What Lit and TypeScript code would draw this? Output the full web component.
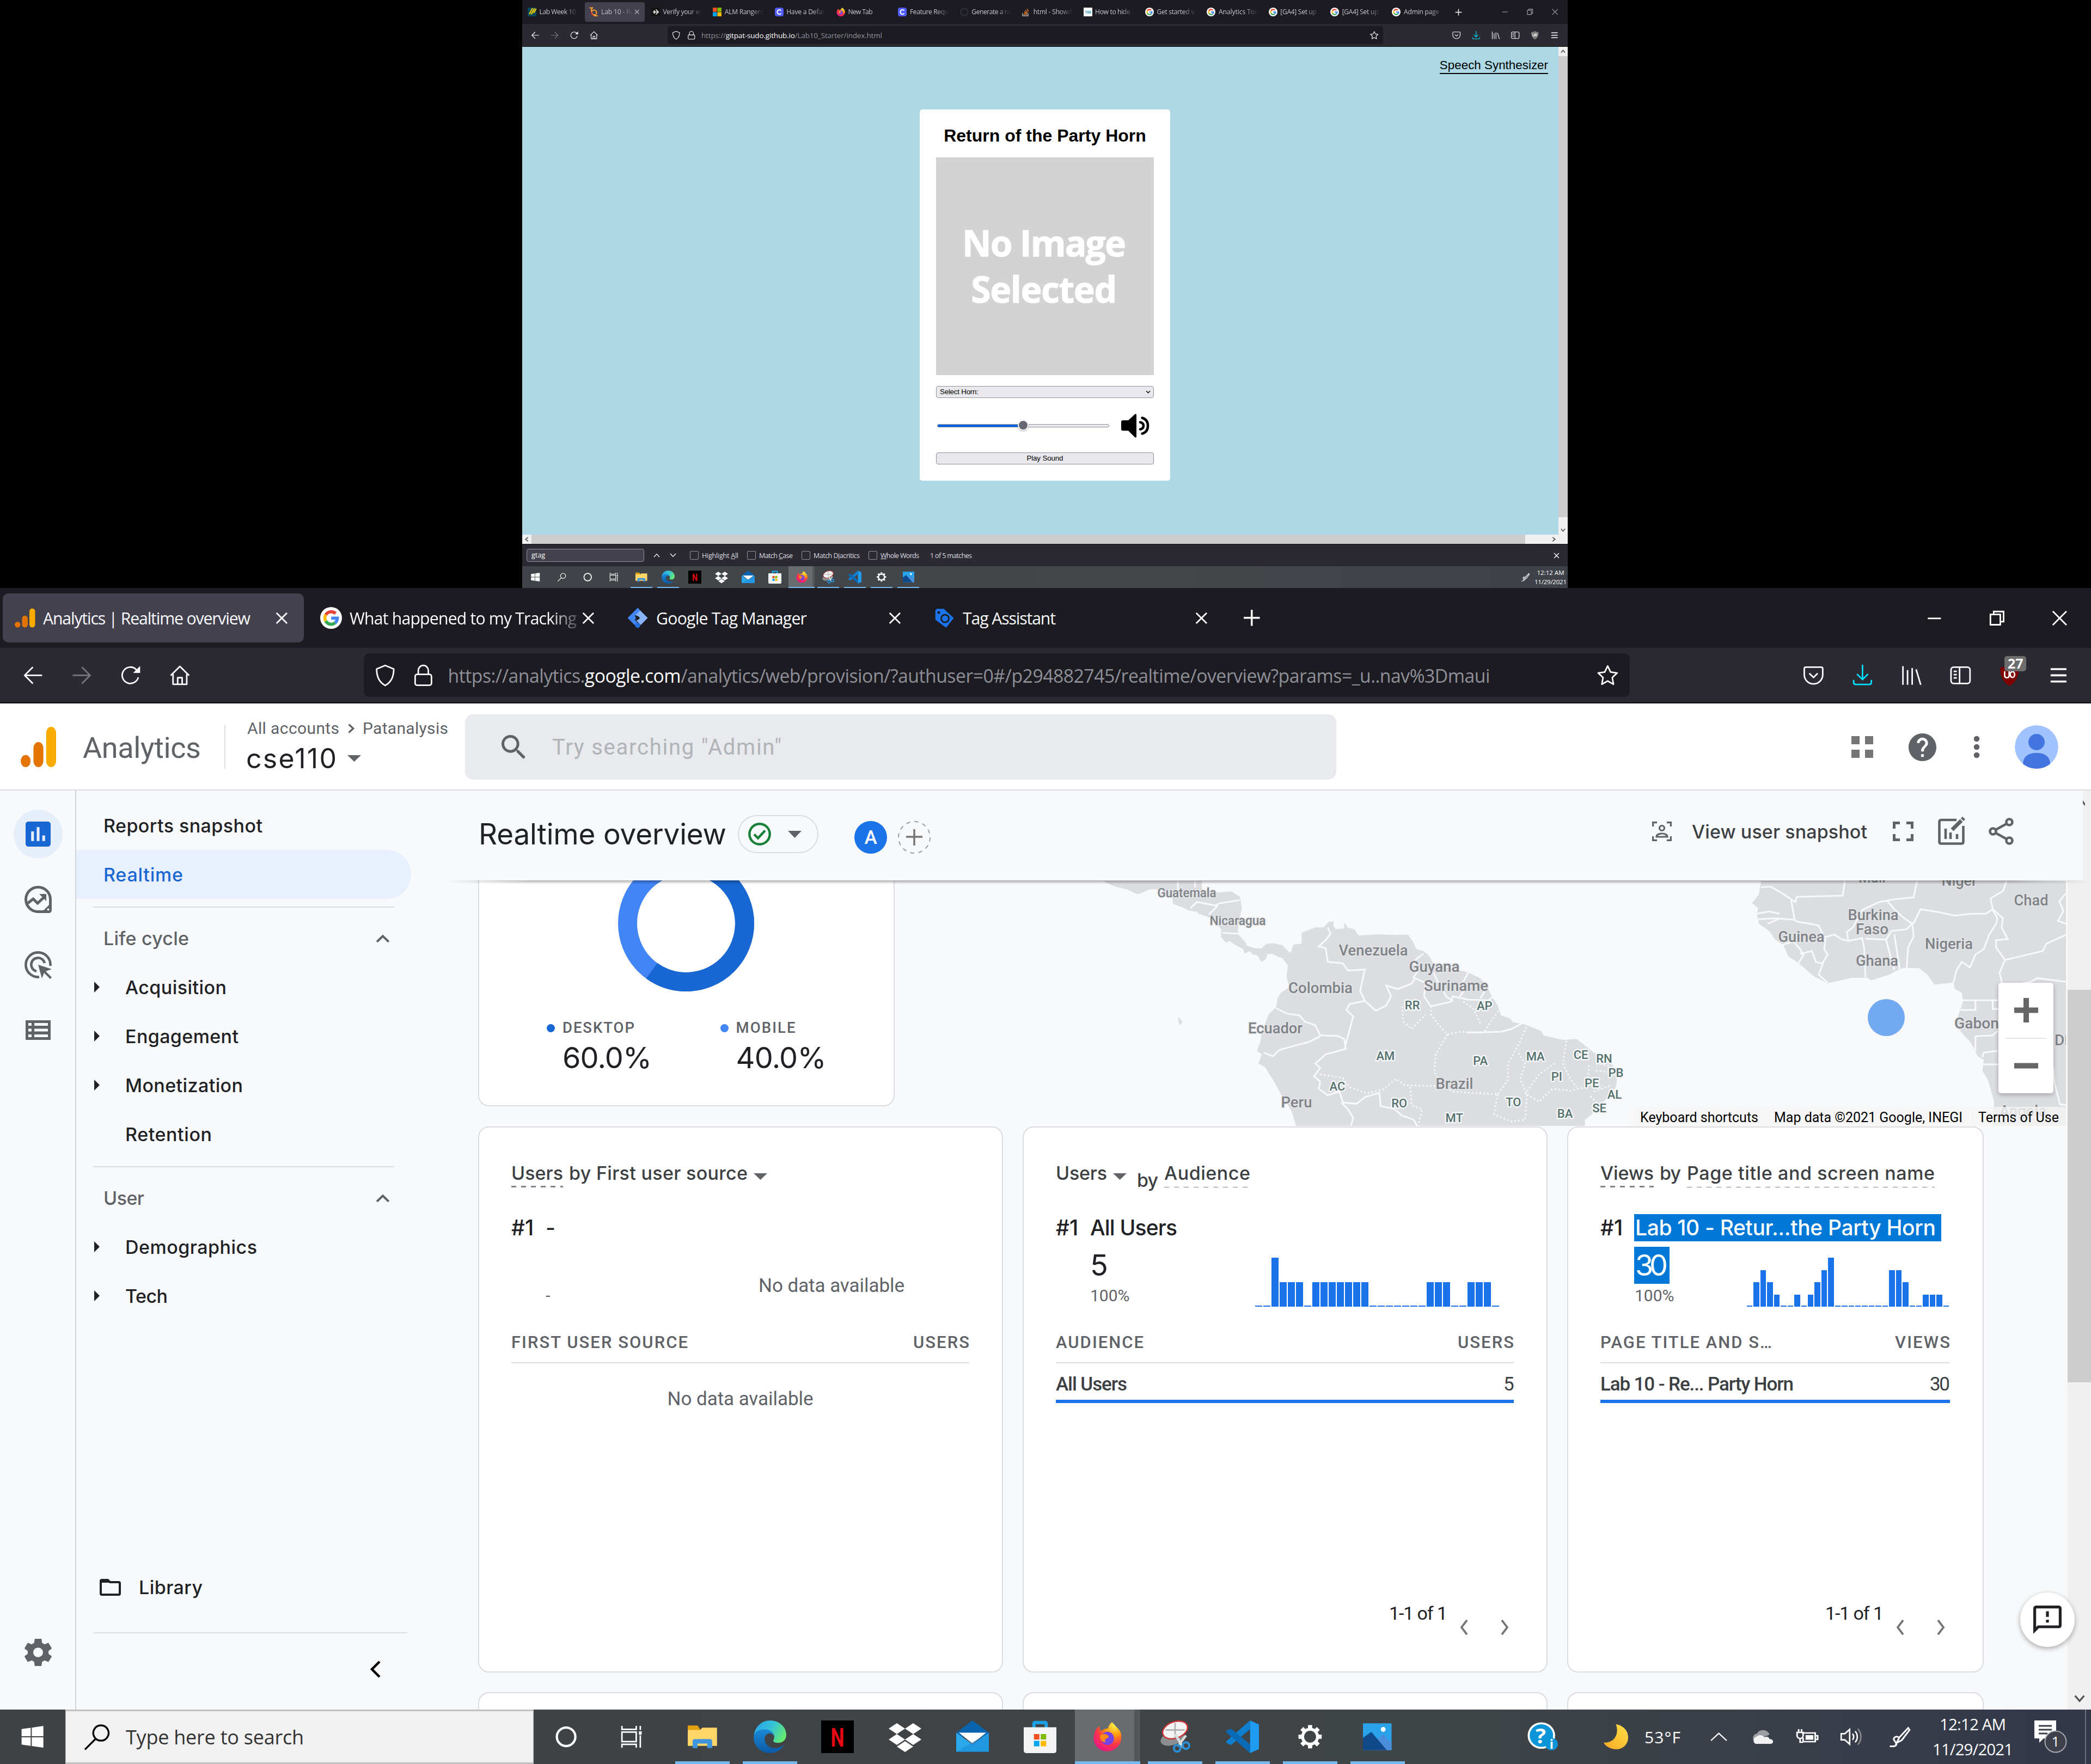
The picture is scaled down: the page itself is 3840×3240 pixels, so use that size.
import { LitElement, html, css, svg, unsafeCSS, noChange, nothing } from "lit";
import { customElement, property } from "lit/decorators.js";
import { directive, Directive } from "lit/directive.js";
import { classMap } from "lit/directives/class-map.js";

/* Tracks a single line of text out to a given width. */
class Fit extends Directive {
  render(_w: number) {
    return noChange;
  }
  update(part: any, [w]: [number]) {
    const el = part.element as HTMLElement;
    Promise.resolve().then(() => {
      const r = document.createRange();
      r.selectNodeContents(el);
      el.style.letterSpacing = "0px";
      const w0 = r.getBoundingClientRect().width;
      const n = (el.textContent || "").trim().length;
      if (w0 && n > 1) el.style.letterSpacing = ((w - w0) / (n - 1)).toFixed(3) + "px";
      el.style.width = w + "px";
    });
    return noChange;
  }
}
const fit = directive(Fit);

/* Lengths in screen units: 1px on the small display, 2.5px on the large one. */
const u = (n: number) => unsafeCSS(`calc(var(--u) * ${n})`);

const base = css`
  * { box-sizing: border-box; }
  svg { display: block; flex: none; overflow: visible; }
  .fit { display: inline-block; white-space: nowrap; flex: none; }
`;

const box = (vb: string, w: number, h: number, body: unknown) =>
  html`<svg viewBox=${vb} width=${w} height=${h} preserveAspectRatio="none">${body}</svg>`;

const googleG = svg`<circle cx="8" cy="8" r="8" fill="#fff"/><g fill="none" stroke-width="2.3"><path stroke="#ea4335" d="M4.1 5.7A4.6 4.6 0 0 1 11.3 4.8"/><path stroke="#fbbc05" d="M4.1 10.3a4.6 4.6 0 0 1 0-4.6"/><path stroke="#34a853" d="M4.1 10.3a4.6 4.6 0 0 0 6.9 1.3"/><path stroke="#4285f4" d="M8.1 8.1h4.5a4.6 4.6 0 0 1-1.6 3.5"/></g>`;
const gaBars = svg`<rect x="11.6" y="1" width="4.2" height="14" rx="2.1" fill="#f9ab00"/><rect x="6.2" y="6.3" width="4.2" height="8.7" rx="2.1" fill="#e37400"/><circle cx="2.9" cy="12.9" r="2.1" fill="#e37400"/>`;
const fox = svg`<defs><radialGradient id="fx" cx=".75" cy=".1" r="1"><stop offset="0" stop-color="#fff44f"/><stop offset=".35" stop-color="#ff980e"/><stop offset=".65" stop-color="#ff3647"/><stop offset="1" stop-color="#e31587"/></radialGradient></defs><path fill="url(#fx)" d="M15.4 5.4C14.6 3.6 13 2.6 12.2 1.6 11.5.8 11 .4 10.8 0 9.4.9 8.7 2.3 8.5 3.4 6.8 3.5 5.4 4.2 4.6 5 3.9 4.3 3.6 3.3 3.7 2.3 2.3 3 1.3 4.3.9 6.2.2 8.8.2 11.2 2.2 13.4 3.6 15 5.7 16 8 16c4.4 0 8-3.5 8-7.8 0-1-.2-2-.6-2.8z"/><circle cx="8.2" cy="8.9" r="3.6" fill="#7542e5"/><path fill="#ff8a16" d="M4 7.5c1-1.2 2.6-1.3 4-.5 1 .6 1.3 1.3.2 1.7-1.5.5-2 1.5-.8 2.3-2 .3-3.7-1.4-3.4-3.5z"/>`;

const FAV: Record<string, unknown> = {
  ga: gaBars,
  google: googleG,
  gtm: svg`<path fill="#8ab4f8" d="M8 .6 15.4 8 10.3 13.2 7 9.8 8.8 8 5.7 4.9z"/><path fill="#4285f4" d="M9.9 2.5 5.9 6.6 7.2 8 5.9 9.4l3.7 3.8L8 15.4.6 8 8 .6z"/><circle cx="8" cy="13.4" r="1.9" fill="#246fdb"/><path fill="#1c1b22" d="M8 6.3 9.7 8 8 9.7 6.3 8z"/>`,
  ta: svg`<path fill="#1a73e8" d="M2.5 1.3h5.2L15 8l-5.6 7.2L1.5 9.3V2.5z"/><circle cx="4" cy="4" r="1" fill="#1c1b22"/><circle cx="8.6" cy="8.4" r="2.8" fill="none" stroke="#1c1b22" stroke-width="1.1"/>`,
  lab: svg`<rect width="16" height="16" fill="#00465c"/><g stroke="#ffcd00" stroke-width="2.2"><path d="M3 12 9 1M6.5 12.5 12.5 1.5M11 10l4.5-8"/></g>`,
  horn: svg`<circle cx="9" cy="9" r="4.6" fill="none" stroke="#ffa033" stroke-width="2"/><path d="M.5.5h5.5L4 3.5V10l6 5h5.5" fill="none" stroke="#ffa033" stroke-width="2"/><path d="M3.5 7c0 4 1 6 4 7" fill="none" stroke="#be1931" stroke-width="1.5"/>`,
  arrow: svg`<rect width="16" height="16" fill="#151515"/><path d="M3 8h9M8.5 3.5 13 8l-4.5 4.5M5 5l2 3-2 3" fill="none" stroke="#eee" stroke-width="1.7"/>`,
  ms: svg`<path fill="#f25022" d="M0 0h7.6v7.6H0z"/><path fill="#7fba00" d="M8.4 0H16v7.6H8.4z"/><path fill="#00a4ef" d="M0 8.4h7.6V16H0z"/><path fill="#ffb900" d="M8.4 8.4H16V16H8.4z"/>`,
  c: svg`<rect width="16" height="16" rx="4" fill="#505cfd"/><path d="M11.5 5.5A4 4 0 1 0 11.5 10.5" fill="none" stroke="#fff" stroke-width="2"/>`,
  fox,
  gh: svg`<circle cx="8" cy="8" r="6.5" fill="none" stroke="#2b3138" stroke-width="2.5"/>`,
  so: svg`<path d="M2 10v5h10v-5" fill="none" stroke="#bcbbbb" stroke-width="1.4"/><path d="M4 12.6h6M4.2 10.2l6 .8M5 7.6l5.4 2.2M6.8 4.8l4.5 3.6M10 2l3 5" stroke="#f48024" stroke-width="1.3"/>`,
  tim: svg`<rect width="16" height="16" fill="#fff"/><text x="8" y="10.5" text-anchor="middle" font-family="Liberation Sans, sans-serif" font-weight="700" font-size="6.5" fill="#2a8fb5">TIM</text>`,
};

const UI: Record<string, unknown> = {
  back: svg`<path d="M8 1.8 1.8 8 8 14.2M2 8h13"/>`,
  fwd: svg`<path d="M8 1.8 14.2 8 8 14.2M14 8H1"/>`,
  reload: svg`<path d="M13.6 9.5A6.2 6.2 0 1 1 12 3.6L14 5.4"/><path d="M15 .9v5.3H9.7z" fill="currentColor" stroke="none"/>`,
  home: svg`<path d="M1 8.2 8 1.2l7 7M2.8 7v7.8h10.4V7M6.3 14.5V9.8h3.4v4.7" stroke-linejoin="round"/>`,
  shield: svg`<path d="M8 .5 14.5 3.2C14.5 9 12.7 13.2 8 15.7 3.3 13.2 1.5 9 1.5 3.2z" stroke-linejoin="round"/>`,
  lock: svg`<rect x="1.8" y="7.3" width="12.4" height="8.2" rx="1.5"/><path d="M4.2 7.2V4.3a3.8 3.8 0 0 1 7.6 0v2.9"/>`,
  star: svg`<path stroke-linejoin="round" d="m8 .9 2.2 4.6 5 .7-3.7 3.5.9 5.1L8 12.3l-4.4 2.5.9-5.1L.8 6.2l5-.7z"/>`,
  pocket: svg`<path d="M2.2 1.8h11.6q1.2 0 1.2 1.2v4.5a7 7 0 0 1-14 0V3q0-1.2 1.2-1.2zM4.8 6.5 8 9.6l3.2-3.1"/>`,
  down: svg`<path stroke="#00ddff" d="M8 0v11M3.8 7 8 11.2 12.2 7M1.3 11.5v1.8q0 1.6 1.6 1.6h10.2q1.6 0 1.6-1.6v-1.8"/>`,
  lib: svg`<path d="M1.5 1v14.2M5 4v11.2M8.5 2.5v12.7M11.5 3.5l3.5 11.7"/>`,
  side: svg`<rect x=".8" y="1.8" width="14.4" height="12.4" rx="2"/><path d="M7.3 2v12M2.8 5h2.4M2.8 7.5h2.4M2.8 10h2.4"/>`,
  menu: svg`<path stroke-width="1.5" d="M2 3.3h12M2 8h12M2 12.7h12"/>`,
  x: svg`<path d="M4 4l8 8M12 4l-8 8"/>`,
  plus: svg`<path stroke-width="1.5" d="M8 1.7v12.6M1.7 8h12.6"/>`,
  min: svg`<path d="M3 8.2h10"/>`,
  max: svg`<path d="M3 5.2h7.5V13H3zM5.5 5V3h7.5v7.7h-2"/>`,
  close: svg`<path d="M2.8 2.8l10.4 10.4M13.2 2.8 2.8 13.2"/>`,
};
const ui = (k: string, cls = "s16") => html`<svg class="ui ${cls}" viewBox="0 0 16 16">${UI[k]}</svg>`;

interface Tab { t: string; i: string; w: number; active?: boolean; }

const SEGOE = css`"Open Sans", "Noto Sans", sans-serif`;

@customElement("browser-chrome")
class BrowserChrome extends LitElement {
  @property({ attribute: false }) tabs: Tab[] = [];
  @property({ attribute: false }) url = ["", "", ""];
  @property({ type: Number }) urlWidth = 0;
  @property({ type: Boolean }) big = false;
  @property() badge = "";
  static styles = [base, css`
    :host { display: block; font-family: ${SEGOE}; color: #fbfbfe; background: #1c1b22; flex: none; }
    .ui { fill: none; stroke: currentColor; stroke-width: 1.15; }
    .s16 { width: ${u(15.5)}; height: ${u(15.5)}; }
    .s14 { width: ${u(15)}; height: ${u(15)}; }
    .strip { display: flex; height: ${u(44)}; padding: ${u(4)} 0 ${u(4)} ${u(2)}; gap: ${u(4)}; align-items: center; }
    .tab { width: ${u(109.4)}; height: ${u(36)}; border-radius: ${u(4)}; display: flex; align-items: center; padding: 0 ${u(8)} 0 ${u(8)}; flex: none; color: #c4c4ca; }
    .tab.active { background: #42414d; padding-right: ${u(6.5)}; }
    .big .tab { width: ${u(221.2)}; color: #fbfbfe; padding-right: ${u(8.6)}; }
    .fav { width: ${u(16)}; height: ${u(16)}; }
    .title { flex: 1; min-width: 0; overflow: hidden; white-space: nowrap; margin-left: ${u(5.6)}; font-size: ${u(12.1)}; line-height: ${u(20)}; padding-top: ${u(.4)}; mask-image: linear-gradient(90deg, #000 calc(100% - ${u(24)}), transparent); }
    .big .title { mask-image: linear-gradient(90deg, #000 calc(100% - ${u(22)}), #0003); margin-right: ${u(-.4)}; }
    .big .title.short { mask-image: none; }
    .add { width: ${u(36)}; display: grid; place-items: center; margin-left: ${u(-1.2)}; }
    .wins { margin-left: auto; display: flex; color: #a5a5ab; }
    .big .wins { color: #fff; }
    .wins > * { width: ${u(46)}; display: grid; place-items: center; }
    .bar { height: 42px; background: #2b2a33; border-bottom: 1px solid #0c0c0d; display: flex; align-items: center; }
    .big .bar { height: 102px; border-bottom-width: 2px; }
    .nav { width: ${u(267)}; padding-left: ${u(6)}; display: flex; flex: none; }
    .cell { width: ${u(36)}; display: grid; place-items: center; position: relative; }
    .dim { color: #77767e; }
    .url { flex: 1; height: ${u(32.3)}; background: #1c1b22; border-radius: ${u(4)}; display: flex; align-items: center; padding: 0 ${u(2)}; font-size: ${u(13.5)}; color: #8f8f98; }
    .url b { font-weight: 400; color: #fbfbfe; }
    .url .c { width: ${u(28)}; display: grid; place-items: center; flex: none; color: #fbfbfe; }
    .url .c:last-child { margin-left: auto; }
    .addr { margin-left: ${u(4)}; padding-top: ${u(.4)}; }
    .right { width: ${u(339)}; padding-right: ${u(6)}; display: flex; justify-content: flex-end; flex: none; }
    .n { position: absolute; left: ${u(14.5)}; top: ${u(-6.2)}; background: #6d6d6d; border-radius: ${u(2)}; font: 700 ${u(10)}/${u(11)} "Open Sans", sans-serif; width: ${u(16)}; text-align: center; }
  `];
  render() {
    return html`<div class=${classMap({ big: this.big })}>
      <div class="strip">
        ${this.tabs.map((t) => html`<div class=${classMap({ tab: true, active: !!t.active })}>
          <svg class="fav" viewBox="0 0 16 16">${FAV[t.i]}</svg>
          <div class=${classMap({ title: true, short: this.big && t.w < 400 })}><span class="fit" ${fit(t.w)}>${t.t}</span></div>
          ${this.big || t.active ? ui("x") : nothing}</div>`)}
        <div class="add">${ui("plus", "s14")}</div>
        <div class="wins"><div>${ui("min")}</div><div>${ui("max")}</div><div>${ui("close")}</div></div>
      </div>
      <div class="bar">
        <div class="nav"><div class="cell">${ui("back")}</div><div class="cell dim">${ui("fwd")}</div><div class="cell">${ui("reload")}</div><div class="cell">${ui("home")}</div></div>
        <div class="url"><div class="c">${ui("shield")}</div><div class="c">${ui("lock")}</div>
          <span class="addr fit" ${fit(this.urlWidth)}>${this.url[0]}<b>${this.url[1]}</b>${this.url[2]}</span>
          <div class="c">${ui("star")}</div></div>
        <div class="right">
          ${["pocket", "down", "lib", "side"].map((k) => html`<div class="cell">${ui(k)}</div>`)}
          <div class="cell"><svg class="s16" viewBox="0 0 16 16"><path fill=${this.badge ? "#800000" : "#7b7b7b"} d="M8 0c2 1.4 4.5 2 7 2 0 6-1.5 11-7 14C2.5 13 1 8 1 2c2.5 0 5-.6 7-2z"/><path d="M4.3 5v3q0 1.8 1.7 1.8T7.7 8V5M8.5 7.4a1.7 2.2 0 1 0 3.4 0 1.7 2.2 0 1 0-3.4 0" fill="none" stroke="#fff" stroke-width="1.1"/></svg>${this.badge ? html`<span class="n">${this.badge}</span>` : nothing}</div>
          <div class="cell">${ui("menu")}</div>
        </div>
      </div></div>`;
  }
}

const APPS: { k: string; s: number; on?: boolean; b: unknown }[] = [
  { k: "explorer", s: 21, on: true, b: svg`<path fill="#e5a00d" d="M0 2h8l2 3v4H0z"/><path fill="#ffd667" d="M0 6h10l2-2h12v16H0z"/><path fill="#3f96dd" d="M4 22v-6q0-2 2-2h12q2 0 2 2v6h-4v-4H8v4z"/>` },
  { k: "edge", s: 24, on: true, b: svg`<defs><linearGradient id="e1" x1="0" x2="1" y1=".2" y2=".6"><stop offset="0" stop-color="#2aa5e8"/><stop offset=".5" stop-color="#35c1d8"/><stop offset="1" stop-color="#66eb6e"/></linearGradient><linearGradient id="e2" x1="0" x2="0" y1="0" y2="1"><stop offset="0" stop-color="#1b8ad8"/><stop offset="1" stop-color="#0c59a4"/></linearGradient></defs><path fill="url(#e1)" d="M.2 11C1 4.5 6 0 12 0c7 0 12 5 12 10.5 0 4-3 6-6 6-3 0-4-1.2-3.5-2 1.5-2.5.5-6.5-4-6.500C6 8 2 9 .2 11z"/><path fill="url(#e2)" d="M.1 12C.5 8 4.5 6.5 8 6.5c4 0 6.500 2 6.500 4.500-1-1.600-3-2-4.500-1C6.500 12 8 18.500 13 20c3.500 1 7 0 9.500-2-2.500 4-6.500 6-10.500 6C5 24-.3 18.500.1 12z"/>` },
  { k: "netflix", s: 24, b: svg`<path d="M0 0h24v24H0z"/><text x="12" y="19" text-anchor="middle" font-family="Roboto, sans-serif" font-weight="700" font-size="19" textLength="10" lengthAdjust="spacingAndGlyphs" fill="#e50914">N</text>` },
  { k: "dropbox", s: 24, b: svg`<path fill="#fff" d="m6 2 6 4-6 4-6-4zM18 2l6 4-6 4-6-4zM6 10l6 4-6 4-6-4zM18 10l6 4-6 4-6-4zM6 19.2l6-4 6 4-6 4z"/>` },
  { k: "mail", s: 24, b: svg`<path fill="#0a64ad" d="M12 0 24 9v3H0V9z"/><path fill="#fff" d="M2 9h20L12 17z"/><path fill="#2aa8ea" d="M0 9l12 8.5L24 9v14H0z"/><path fill="#1784d8" d="M0 23 24 9v14z" opacity=".5"/>` },
  { k: "store", s: 24, b: svg`<path d="M7.5 6V2.500q0-1 1-1h7q1 0 1 1V6" fill="none" stroke="#1ba0e2" stroke-width="2.5"/><path fill="#f3f3f3" d="M0 5h24v17q0 2-2 2H2q-2 0-2-2z"/><path fill="#f25022" d="M7.5 10h4v4h-4z"/><path fill="#7fba00" d="M12.5 10h4v4h-4z"/><path fill="#00a4ef" d="M7.5 15h4v4h-4z"/><path fill="#ffb900" d="M12.5 15h4v4h-4z"/>` },
  { k: "firefox", s: 22, on: true, b: svg`<g transform="scale(1.5)">${fox}</g>` },
  { k: "snip", s: 24, on: true, b: svg`<ellipse cx="10" cy="13" rx="9" ry="5" fill="#8b8f92" transform="rotate(-20 10 13)"/><ellipse cx="12" cy="7" rx="9.5" ry="6" fill="#f4f4f4" stroke="#c33" transform="rotate(-20 12 7)"/><path d="M5 7h14M12 2v11" stroke="#aaa"/><path d="M12 10l6 10M20 11l-6 8" stroke="#d8dde0" stroke-width="1.8"/><circle cx="13.5" cy="20.5" r="2.4" fill="none" stroke="#2b8fd6" stroke-width="1.6"/><circle cx="20" cy="18.5" r="2.4" fill="none" stroke="#2b8fd6" stroke-width="1.6"/>` },
  { k: "code", s: 24, on: true, b: svg`<path fill="#1f9cf0" d="M17.5 0 24 3v18l-6.500 3z"/><path fill="#0f7fd0" d="M17.5 0v6.500L3.500 18 0 16.500v-1.200z"/><path fill="#0a6ab6" d="M17.5 24v-6.500L3.500 6 0 7.500v1.200z"/>` },
  { k: "settings", s: 22, on: true, b: svg`<path fill="none" stroke="#fff" stroke-width="3" d="M12 4.500a7.500 7.500 0 1 0 .01 0z"/><path fill="none" stroke="#fff" stroke-width="4.200" d="M12 .3V4M12 20v3.700M.3 12H4M20 12h3.700M3.700 3.700l2.600 2.600M17.700 17.700l2.600 2.600M3.700 20.300l2.600-2.600M17.700 6.300l2.600-2.600"/>` },
  { k: "photos", s: 22, on: true, b: svg`<path fill="#2aa3ea" d="M0 1h24v22H0z"/><path fill="#4a8edb" d="M11 15 17 10l7 7v6H11z"/><path fill="#10498a" d="M0 13 7 8l13 15H0z"/><circle cx="17" cy="6" r="2" fill="#fff"/>` },
];
const SHELL: Record<string, unknown> = {
  win: svg`<path fill="#fff" d="M0 2.3 6.7 1.4v6.2H0zM7.5 1.3 16 0v7.6H7.5zM0 8.4h6.7v6.3L0 13.7zM7.5 8.4H16V16l-8.5-1.2z"/>`,
  find: svg`<path fill="none" stroke="currentColor" stroke-width="1.1" d="M10.8 1a4.7 4.7 0 1 1-.01 0zM7.3 9.5 1 15.8"/>`,
  ring: svg`<circle cx="8" cy="8" r="6.8" fill="none" stroke="#fff" stroke-width="1.7"/>`,
  view: svg`<path fill="none" stroke="#fff" stroke-width="1.1" d="M1 4.5h10.5v7H1zM1 0v2.5h10.5V0M1 16v-2.5h10.5V16M14.5 0v3M14.5 7v9"/><path fill="#fff" d="M13.5 4h2v2.500h-2z"/>`,
};
const PEN = svg`<g fill="none" stroke="#fff" stroke-width="1.2"><path d="M14.5 1.5 8 8.5l-2 4 3.8-2L15.5 3zM8 8.5C5 7 3 9 4.5 11S7 14 4 15H1"/></g>`;

@customElement("task-bar")
class TaskBar extends LitElement {
  @property({ type: Boolean }) full = false;
  static styles = [base, css`
    :host { display: block; height: ${u(40)}; background: linear-gradient(90deg, #404347, #43474a 60%, #3e4147); color: #fff; font-family: ${SEGOE}; flex: none; }
    :host([full]) { background: linear-gradient(90deg, #3f4245, #3f4447 70%, #33384a); }
    .row { display: flex; height: 100%; align-items: stretch; }
    .c { width: ${u(48)}; display: grid; place-items: center; flex: none; }
    .sh { width: ${u(16.5)}; height: ${u(16)}; }
    .search { width: 860px; background: #f1f1f1; border: solid #c0c0c0; border-width: 3px 1px; color: #333; display: flex; align-items: center; padding-left: 31px; font-size: 36px; }
    .search .g { width: 50px; height: 48px; color: #000; margin-right: 29px; }
    .apps { display: flex; margin-left: 3px; gap: 1px; }
    .full .apps { margin-left: 9.5px; gap: 4px; }
    .a { width: ${u(48)}; display: grid; place-items: center; position: relative; }
    .a.on::after { content: ""; position: absolute; bottom: 0; left: ${u(4)}; right: ${u(4)}; height: ${u(2)}; background: #76b9ed; }
    .a.firefox { background: linear-gradient(90deg, #696c6f 91%, #53575a 91%); }
    .a.firefox::after { left: 0; right: 0; }
    .p21 { width: ${u(21.5)}; height: ${u(20)}; } .p22 { width: ${u(21)}; height: ${u(21.5)}; } .p24 { width: ${u(24)}; height: ${u(24)}; }
    .a.settings svg { width: ${u(17.5)}; height: ${u(17.5)}; }
    .tray { margin-left: auto; display: flex; align-items: center; font-size: ${u(12)}; }
    .clock { display: flex; flex-direction: column; align-items: center; line-height: ${u(18.6)}; font-size: ${u(11.8)}; }
    .small .pen { margin-right: 9px; } .small .clock { margin-right: 2px; line-height: 17px; font-size: 11.5px; }
    .t1 { margin-right: 84px; } .t2 { margin-right: 30px; } .t3 { margin-right: 54px; } .t4 { margin-right: 43px; } .t5 { margin-right: 40px; } .t6 { margin-right: 41px; } .t7 { margin-right: 49px; }
    .full .pen { margin-right: 41px; }
    .note { margin-left: 39px; margin-right: 33px; }
    .peek { width: 11px; border-left: 2px solid #6c7079; height: 100%; }
  `];
  render() {
    return html`<div class="row ${this.full ? "full" : "small"}">
      <div class="c"><svg class="sh" viewBox="0 0 16 16">${SHELL.win}</svg></div>
      ${this.full
        ? html`<div class="search"><svg class="g" viewBox="0 0 16 16">${SHELL.find}</svg><span class="fit" ${fit(327)}>Type here to search</span></div>`
        : html`<div class="c"><svg class="sh" viewBox="0 0 16 16">${SHELL.find}</svg></div>`}
      <div class="c"><svg class="sh" viewBox="0 0 16 16">${SHELL.ring}</svg></div>
      <div class="c"><svg class="sh" viewBox="0 0 16 16">${SHELL.view}</svg></div>
      <div class="apps">${APPS.map((a) => html`<div class="a ${a.k} ${a.on ? "on" : ""}"><svg class="p${a.s}" viewBox="0 0 24 24" preserveAspectRatio="none">${a.b}</svg></div>`)}</div>
      ${this.full ? html`<div class="tray">
        <span class="t1">${box("0 0 24 24", 56, 54, svg`<circle cx="11" cy="11" r="10" fill="#0b95d8" stroke="#fff" stroke-width="1.6"/><text x="10.5" y="17.5" text-anchor="middle" font-family="Open Sans, sans-serif" font-weight="700" font-size="17" fill="#fff">?</text><circle cx="19" cy="18" r="5" fill="#0b95d8"/><text x="19" y="22" text-anchor="middle" font-family="Open Sans, sans-serif" font-weight="700" font-size="10" fill="#fff">i</text>`)}</span>
        <span class="t2">${box("0 0 24 24", 45, 46, svg`<defs><linearGradient id="mo" x1="1" y1="0" x2="0" y2="1"><stop offset="0" stop-color="#ffe14a"/><stop offset="1" stop-color="#f7a823"/></linearGradient></defs><path fill="url(#mo)" d="M12 0c7 1 12 6 12 12.500C24 19 19 24 12.500 24 7 24 2 21.500 0 17.500c9 1 16-7 12-17.500z"/>`)}</span>
        <span class="fit t3" ${fit(66)}>53°F</span>
        <span class="t4">${box("0 0 16 8", 33, 16, svg`<path d="M1 7.5 8 .8l7 6.7" fill="none" stroke="#fff" stroke-width="1.1"/>`)}</span>
        <span class="t5">${box("0 0 20 14", 42, 28, svg`<path fill="#9c9fa3" d="M3 11a4 4 0 0 1 2-7 6 6 0 0 1 11 1z"/><path fill="#f2f2f2" d="M4 13.5a3.5 3.5 0 0 1 .5-6.500c2-2 5-2 7 .5 2-1 4-.5 4.500 1.500 4 0 4 4.500 1 4.500z"/>`)}</span>
        <span class="t6">${box("0 0 18 14", 40, 28, svg`<g fill="none" stroke="#fff" stroke-width="1.3"><path d="M5 3.5h11v8H6V8M16.500 6H18v3.500h-1.500M1 3h5v3a2.500 2.500 0 0 1-5 0zM2.300 0v3M4.700 0v3M3.500 8.500V12H6"/></g><path fill="#fff" d="M8 5.500h6.500v4.200H8z"/>`)}</span>
        <span class="t7">${box("0 0 18 16", 40, 36, svg`<path d="M1 5.5h3L8 2v12l-4-3.500H1z" fill="none" stroke="#fff" stroke-width="1.2"/><path d="M10.300 5.500a3.500 3.500 0 0 1 0 5M12.500 3.500a6.500 6.500 0 0 1 0 9" fill="none" stroke="#fff" stroke-width="1.2"/><path d="M14.700 1.500a9.500 9.500 0 0 1 0 13" fill="none" stroke="#888" stroke-width="1.2"/>`)}</span>
        <span class="pen">${box("0 0 16 16", 40, 40, PEN)}</span>
        <div class="clock"><span class="fit" ${fit(122)}>12:12 AM</span><span class="fit" ${fit(148)}>11/29/2021</span></div>
        <span class="note">${box("0 0 60 60", 60, 60, svg`<path fill="#fff" d="M0 0h40v33H17L9 41v-8H0z"/><path d="M8 10h24M8 17h24M8 24h16" stroke="#3a3e48" stroke-width="3"/><circle cx="39" cy="39" r="19.5" fill="#3e414b" stroke="#a8a9ad" stroke-width="2"/><text x="39" y="48" text-anchor="middle" font-family="Open Sans, sans-serif" font-size="26" fill="#fff">1</text>`)}</span>
        <div class="peek"></div>
      </div>` : html`<div class="tray"><span class="pen">${box("0 0 16 16", 16, 16, PEN)}</span>
        <div class="clock"><span class="fit" ${fit(50)}>12:12 AM</span><span class="fit" ${fit(59)}>11/29/2021</span></div></div>`}
    </div>`;
  }
}

@customElement("party-screen")
class PartyScreen extends LitElement {
  static styles = [base, css`
    :host { display: flex; flex-direction: column; width: 1920px; height: 1080px; --u: 1px; font-family: "Liberation Sans", Arial, sans-serif; background: #add8e6; }
    .view { height: 896px; display: flex; }
    .page { flex: 1; display: flex; flex-direction: column; align-items: flex-start; }
    .link { align-self: flex-end; margin: 19px 19px 0 0; font-size: 22.4px; line-height: 29px; border-bottom: 2px solid #000; color: #000; }
    .card { margin: 65px 0 0 730px; width: 460px; height: 682px; background: #fff; border-radius: 5px; padding: 9px 30px 0; }
    h1 { margin: 0; font-size: 32px; line-height: 79px; text-align: center; white-space: nowrap; }
    .pic { height: 400px; background: #d3d3d3; color: #fff; text-align: center; font: 700 66px/84.5px "Open Sans", "Noto Sans", sans-serif; padding-top: 114px; -webkit-text-stroke: 1px #fff; }
    .pic .fit { margin-left: -5px; }
    .field { height: 22px; border: 1px solid #8f8f9d; border-radius: 4px; background: #e9e9ed; font-size: 13.33px; line-height: 20px; display: flex; align-items: center; }
    .sel { margin-top: 20px; justify-content: space-between; padding: 0 5px 0 6px; }
    .btn { justify-content: center; }
    .vol { height: 100px; display: flex; align-items: center; gap: 22px; padding: 1px 0 0 2px; }
    .track { width: 316px; height: 6px; border-radius: 3px; border: 1px solid #8f8f9d; background: linear-gradient(90deg, #0060df 50%, #e9e9ed 50%); position: relative; }
    .thumb { position: absolute; left: 147px; top: -9px; width: 20px; height: 20px; border-radius: 50%; background: #676774; border: 2px solid #fff; box-shadow: 0 1px 2px #0006; }
    .vs { width: 17px; background: #f0f0f0; display: flex; flex-direction: column; justify-content: space-between; }
    .hs { height: 17px; background: #f0f0f0; display: flex; align-items: center; }
    .vs .thumbv { height: 847px; background: #cdcdcd; }
    .thumbh { width: 1825px; height: 17px; background: #cdcdcd; }
    .ar { width: 17px; height: 17px; display: grid; place-items: center; }
    .hs .last { margin-left: 44px; }
    .findbar { height: 41px; border-top: 1px solid #0c0c0d; background: #2b2a33; color: #dcdce0; display: flex; align-items: center; font: 12.5px "Open Sans", "Noto Sans", sans-serif; flex: none; }
    .inp { margin-left: 8px; width: 216px; height: 24px; border: 1px solid #8f8f9d; border-radius: 4px; background: #42414d; color: #fff; padding-left: 8px; line-height: 21px; }
    .ck { width: 16px; height: 16px; border: 1px solid #8f8f9d; border-radius: 2px; background: #2b2a33; margin: 0 6px 0 16px; }
    .inp + svg { margin-left: 17px; } .inp + svg + svg { margin: 0 9px 0 18px; }
    .m { margin-left: 20px; } .cl { margin: 0 15px 0 auto; }
  `];
  private tabs: Tab[] = [
    { t: "Lab Week 10", i: "lab", w: 67 }, { t: "Lab 10 - Return", i: "horn", w: 84, active: true },
    { t: "Verify your email", i: "arrow", w: 90 }, { t: "ALM Rangers", i: "ms", w: 71 },
    { t: "Have a Default", i: "c", w: 80 }, { t: "New Tab", i: "fox", w: 45 },
    { t: "Feature Request", i: "c", w: 87 }, { t: "Generate a random", i: "gh", w: 103 },
    { t: "html - Show/hide", i: "so", w: 92 }, { t: "How to hide a div", i: "tim", w: 92 },
    { t: "Get started with", i: "google", w: 86 }, { t: "Analytics Tools", i: "google", w: 82 },
    { t: "[GA4] Set up An", i: "google", w: 84 }, { t: "[GA4] Set up An", i: "google", w: 84 },
    { t: "Admin page - h", i: "google", w: 82 },
  ];
  render() {
    const a = (d: string) => box("0 0 10 10", 9, 9, svg`<path d=${d} fill="none" stroke="#505050" stroke-width="1.8"/>`);
    const ck = (pre: string, key: string, post: string, w: number) => html`<span class="ck"></span><span class="fit" ${fit(w)}>${pre}<u>${key}</u>${post}</span>`;
    const nav = (d: string) => box("0 0 12 10", 12, 8, svg`<path d=${d} fill="none" stroke="#fbfbfe" stroke-width="1.4"/>`);
    return html`
      <browser-chrome .tabs=${this.tabs} .url=${["https://", "gitpat-sudo.github.io", "/Lab10_Starter/index.html"]} urlWidth="332"></browser-chrome>
      <div class="view"><div class="page">
        <div class="link">Speech Synthesizer</div>
        <div class="card">
          <h1>Return of the Party Horn</h1>
          <div class="pic"><span class="fit" ${fit(301)}>No Image</span><br><span class="fit" ${fit(268)}>Selected</span></div>
          <div class="field sel"><span class="fit" ${fit(71)}>Select Horn:</span>${box("0 0 10 8", 9, 6, svg`<path d="M1 1.5 5 6l4-4.5" fill="none" stroke="#000" stroke-width="1.7"/>`)}</div>
          <div class="vol"><div class="track"><div class="thumb"></div></div>
            ${box("0 0 51 44", 51, 44, svg`<path d="M3 12h10L25 1q3-2 3 1v40q0 3-3 1L13 31H3q-3 0-3-3V15q0-3 3-3z"/><path d="M35 15.5q6 1.5 6 6.500t-6 6.500" fill="none" stroke="#000" stroke-width="4.5" stroke-linecap="round"/><path d="M38.5 7.5q10.500 3 10.500 14.500T38.500 36.500" fill="none" stroke="#000" stroke-width="4.5" stroke-linecap="round"/>`)}
          </div>
          <div class="field btn"><span class="fit" ${fit(67)}>Play Sound</span></div>
        </div>
      </div>
      <div class="vs"><div><div class="ar">${a("M1 7.5 5 2.5l4 5")}</div><div class="thumbv"></div></div><div class="ar">${a("M1 2.5 5 7.5l4-5")}</div></div></div>
      <div class="hs"><div class="ar">${a("M7.5 1 2.5 5l5 4")}</div><div class="thumbh"></div><div class="ar last">${a("M2.5 1 7.5 5l-5 4")}</div></div>
      <div class="findbar"><div class="inp">gtag</div>${nav("M1 9 6 2l5 7")}${nav("M1 1 6 8l5-7")}
        ${ck("Highlight ", "A", "ll", 67)}${ck("Match ", "C", "ase", 62)}${ck("Match D", "i", "acritics", 85)}${ck("", "W", "hole Words", 71)}
        <span class="fit m" ${fit(77)}>1 of 5 matches</span><span class="cl">${box("0 0 10 10", 11, 11, svg`<path d="M1 1l8 8M9 1 1 9" stroke="#fbfbfe" stroke-width="1.3"/>`)}</span></div>
      <task-bar></task-bar>`;
  }
}

const LAND = [
  "M130,54L275,54L275,100L300,118L318,112L330,140L333,200L328,300L327,345L338,390L340,410L352,425L362,425L368,402L378,397L392,408L400,440L404,450L408,405L420,400L420,340L440,310L452,310L460,278L467,278L466,300L470,320L482,315L482,283L487,310L497,322L503,355L530,348L555,352L575,350L582,390L587,430L597,440L605,465L611,505L640,540L660,555L680,590L690,640L697,690L705,740L710,795L723,812L727,832L745,845L768,880L772,905L800,930L820,925L835,970L845,1000L868,1050L880,1110L877,1190L865,1250L850,1300L842,1340L832,1370L832,1404L412,1404L405,1320L390,1230L380,1160L370,1100L367,1080L357,1060L362,1010L355,990L360,940L362,890L372,790L383,750L385,700L390,670L402,640L398,580L400,520L392,480L385,470L377,455L370,458L368,485L361,500L356,465L348,458L345,440L337,455L335,430L325,410L315,385L310,395L303,365L303,320L290,260L270,235L268,225L255,215L250,205L233,180L232,150L215,100L200,100L182,128L165,100L148,85Z",
  "M1088,54L1532,54L1532,1404L1425,1404L1427,1270L1418,1150L1410,1100L1412,1040L1403,1020L1397,970L1392,940L1380,890L1372,850L1376,780L1382,720L1380,670L1370,650L1368,615L1340,625L1330,570L1318,535L1295,533L1285,550L1275,570L1248,602L1243,588L1220,588L1185,618L1165,580L1150,530L1140,500L1128,470L1120,405L1108,375L1103,345L1100,330L1085,290L1082,235L1084,205L1075,175L1085,130Z",
  "M240,800L247,830L242,850Z",
];
const BORDER = [
  "M458,310L462,345L455,380L445,415L455,425L458,500L480,508L487,548L512,542L505,660L512,715L490,732L485,765L495,800L482,985",
  "M383,755L398,785L417,795L425,830L440,850L447,905L472,908L482,925L484,980L455,1010L440,1060L447,1085L438,1130L447,1160L445,1200L458,1235L475,1215L480,1275L500,1282L512,1245L533,1222L535,1295L555,1310L565,1345L583,1370L588,1404",
  "M447,910L430,942L410,962L388,985L378,1020L365,1000", "M478,1275L487,1310L495,1360L492,1404",
  "M512,715L528,770L543,740L550,690L543,630L560,650L580,620L585,590L600,615L598,690L608,745L637,720L640,690L662,708L692,712L700,685",
  "M597,455L582,500L590,545L582,590", "M612,560L618,610L625,650L630,690L640,715", "M662,560L655,610L658,650L650,690", "M690,640L680,700",
  "M740,840L725,870L710,885L660,890",
  "M232,140L240,110L240,54M265,54V90M258,205L268,170L295,190L300,178L330,160M285,240L298,190M305,340L327,345",
  "M1088,90L1102,85L1118,120L1132,155L1138,170L1140,142L1207,135L1210,54",
  "M1132,160L1137,270L1142,280L1160,290L1172,300L1180,365L1195,350L1205,375L1215,385L1235,370L1238,420L1240,585",
  "M1084,265L1110,260L1137,268M1082,235L1100,222L1115,235M1098,290L1115,262M1120,405L1135,388L1145,430L1150,462L1142,510M1145,455L1162,440L1168,500L1178,510L1172,570L1185,615M1182,370L1180,430L1185,460L1177,510",
  "M1215,385L1213,335L1222,310L1235,215L1260,170L1282,155L1310,145L1315,54",
  "M1272,165L1282,210L1295,255L1308,290L1300,320L1278,330L1270,378L1240,372M1270,378L1275,450L1282,545M1282,350L1290,545M1308,280L1310,360L1302,420L1300,535",
  "M1310,290L1320,210L1345,225L1370,245L1395,235L1415,235L1425,210L1422,150L1440,110L1445,54",
  "M1425,215L1432,260L1430,290L1420,350L1412,430L1400,460L1392,530L1380,500L1372,550L1368,615",
  "M1425,210L1440,260L1438,310L1447,375L1430,380L1430,420L1443,490L1465,470L1498,440L1503,400L1532,350M1443,490L1435,560L1440,640L1480,610L1490,590L1532,610",
  "M1532,120L1522,165L1528,220L1520,275L1532,290", "M1380,712H1432M1400,712V765H1378M1425,712V760H1440M1400,990V910L1425,905L1432,880M1410,1025L1412,1000L1432,990M1410,1065H1440M1513,1080L1515,1170L1523,1285L1532,1290",
];
const FINE = [
  "M566,745L568,830L580,870L600,790M608,745L608,790L620,850L632,900L650,885L685,890L695,830L706,770M655,720L670,760L680,840M632,900L615,1010L613,1110L625,1180L640,1215L705,1230L720,1150L720,1060L735,960L748,850",
  "M447,1120L480,1140L490,1190L515,1225L540,1200L557,1145L570,1180L625,1185M578,1190L580,1290L595,1310L590,1404M705,1230L700,1340L725,1380L745,1370L748,1230L738,1150L745,1060L735,1000",
  "M748,1230L765,1270L785,1200L810,1210L835,1190L838,1070M805,935L800,1060L810,1140L820,1190M788,1060L765,1120L745,1230M848,1060L870,1075M848,1100L878,1110M845,1215L870,1180M840,1240L852,1290",
];
type L = [string, number, number, number, number];
const NAMES: L[] = [
  ["Guatemala", 2179.5, 1648, 108, 23], ["Nicaragua", 2273, 1699, 103, 23], ["Venezuela", 2522, 1755, 127, 27], ["Guyana", 2634, 1785, 93, 27],
  ["Suriname", 2674, 1820, 118, 27], ["Colombia", 2425, 1824, 118, 27], ["Ecuador", 2342, 1898, 100, 27], ["Peru", 2381, 2034, 57, 27], ["Brazil", 2671, 2000, 69, 27],
  ["Guinea", 3308, 1730, 85, 27], ["Burkina", 3440, 1690, 93, 27], ["Faso", 3438, 1716, 60, 27], ["Ghana", 3447, 1774, 78, 27], ["Nigeria", 3579, 1743, 88, 27],
  ["Chad", 3730, 1663, 63, 27], ["Niger", 3598, 1627, 65, 27], ["Mali", 3438, 1620.5, 50, 27], ["Gabon", 3630, 1889, 82, 27], ["DR", 3791, 1920, 36, 27], ["Angola", 3715, 2050, 86, 27],
];
const STATES: [string, number, number][] = [
  ["RR", 581, 762], ["AP", 686, 766], ["AM", 542, 1041], ["PA", 680, 1067], ["MA", 760, 1043], ["CE", 826, 1036], ["RN", 860, 1055], ["PB", 877, 1133], ["PI", 791, 1155],
  ["PE", 842, 1190], ["AL", 875, 1253], ["SE", 853, 1328], ["AC", 472, 1209], ["RO", 562, 1302], ["TO", 728, 1297], ["MT", 642, 1382], ["BA", 803, 1360],
];

@customElement("geo-map")
class GeoMap extends LitElement {
  static styles = [base, css`
    :host { display: block; position: relative; width: 2151px; height: 451px; overflow: hidden; font-family: Roboto, sans-serif; }
    .land { fill: #dcdde1; }
    .bd { fill: none; stroke: #f8f9fb; stroke-width: 3; vector-effect: non-scaling-stroke; }
    .fine { fill: none; stroke: #f6f7fa; stroke-width: 3; stroke-dasharray: 3 4; vector-effect: non-scaling-stroke; }
    text { text-anchor: middle; paint-order: stroke; stroke: #e4e5e8; stroke-width: 3px; stroke-linejoin: round; }
    .nm { fill: #7f8387; font-weight: 500; } .st { fill: #56716d; font-size: 22px; font-weight: 500; stroke: #f4f6f7; stroke-width: 5px; }
    .pin { position: absolute; left: 1787px; top: 218px; width: 68px; height: 68px; border-radius: 50%; background: #73a9f0; }
    .zoom { position: absolute; left: 2027px; top: 188px; width: 101px; height: 203px; background: #fff; border-radius: 5px; box-shadow: 0 3px 8px #0004; display: flex; flex-direction: column; align-items: center; justify-content: space-between; padding: 28px 0 28px; }
    .zoom i { width: 75px; height: 2px; background: #e6e6e6; }
    .att { position: absolute; right: 0; bottom: 0; display: flex; gap: 3px; height: 35px; color: #000; font-size: 25px; line-height: 40px; }
    .att > div { background: #f5f5f5cc; padding: 0 13px; }
  `];
  render() {
    return html`
      <svg viewBox="1643 1617 2154 451" width="2154" height="451">
        <g transform="translate(1860 1600) scale(1.26276 .33333)">
          ${LAND.map((d) => svg`<path class="land" d=${d}/>`)}
          ${BORDER.map((d) => svg`<path class="bd" d=${d}/>`)}
          ${FINE.map((d) => svg`<path class="fine" d=${d}/>`)}
        </g>
        ${NAMES.map(([t, x, y, w, s]) => svg`<text class="nm" x=${x} y=${y} font-size=${s} textLength=${w} lengthAdjust="spacingAndGlyphs">${t}</text>`)}
        ${STATES.map(([t, x, y]) => svg`<text class="st" x=${1860 + x * 1.26276} y=${1600 + y / 3}>${t}</text>`)}
      </svg>
      <div class="pin"></div>
      <div class="zoom">${box("0 0 44 45", 44, 45, svg`<path d="M22 0v45M0 22.5h44" stroke="#666" stroke-width="10"/>`)}<i></i>${box("0 0 44 45", 44, 45, svg`<path d="M0 22.5h44" stroke="#666" stroke-width="10"/>`)}</div>
      <div class="att"><div><span class="fit" ${fit(217)}>Keyboard shortcuts</span></div><div><span class="fit" ${fit(346)}>Map data ©2021 Google, INEGI</span></div><div><span class="fit" ${fit(148)}>Terms of Use</span></div></div>`;
  }
}

const GEAR = "M19.43 12.98c.04-.32.07-.64.07-.98s-.03-.66-.07-.98l2.11-1.65c.19-.15.24-.42.12-.64l-2-3.46c-.12-.22-.39-.3-.61-.22l-2.49 1c-.52-.4-1.08-.73-1.69-.98l-.38-2.65C14.46 2.18 14.25 2 14 2h-4c-.25 0-.46.18-.49.42l-.38 2.65c-.61.25-1.17.59-1.69.98l-2.49-1c-.23-.09-.49 0-.61.22l-2 3.46c-.13.22-.07.49.12.64l2.11 1.65c-.04.32-.07.65-.07.98s.03.66.07.98l-2.11 1.65c-.19.15-.24.42-.12.64l2 3.46c.12.22.39.3.61.22l2.49-1c.52.4 1.08.73 1.69.98l.38 2.65c.03.24.24.42.49.42h4c.25 0 .46-.18.49-.42l.38-2.65c.61-.25 1.17-.59 1.69-.98l2.49 1c.23.09.49 0 .61-.22l2-3.46c.12-.22.07-.49-.12-.64l-2.11-1.65zM12 15.5c-1.93 0-3.5-1.57-3.5-3.5s1.57-3.5 3.5-3.5 3.5 1.57 3.5 3.5-1.57 3.5-3.5 3.5z";
const G5 = "#5f6368";
const caret = (w = 25, h = 12) => box("0 0 10 5", w, h, svg`<path d="M0 0h10L5 5z" fill=${G5}/>`);
const chev = (d: string, c: string, w: number, h: number, vb = "0 0 12 8") => box(vb, w, h, svg`<path d=${d} fill="none" stroke=${c} stroke-width="1.9"/>`);

interface Card { rank: string; title: unknown; head: [string, number, string, number]; name?: string; nameW?: number; value?: string; valueW?: number; sel?: boolean; bars?: number[]; row?: [string, number, string, number]; cls: string; }

@customElement("analytics-app")
class AnalyticsApp extends LitElement {
  static styles = [base, css`
    :host { display: flex; flex-direction: column; height: 1848px; font-family: Roboto, "Noto Sans", sans-serif; background: #f8f9fb; color: #202124; }
    .g { font-family: Inter, Roboto, sans-serif; }
    header { height: 160px; border-bottom: 2px solid #dadce0; background: #fff; display: flex; align-items: center; padding: 2px 60px 0 38px; flex: none; }
    .brand { margin: 3px 2px 0 49px; font-size: 54px; color: #5f6368; }
    .sep { width: 2px; height: 80px; background: #dadce0; margin: 0 40px 0 41px; }
    .acct { width: 400px; height: 112px; flex: none; }
    .crumb { height: 43px; display: flex; align-items: center; font-size: 30px; color: #5f6368; justify-content: space-between; width: 369px; }
    .prop { height: 67px; display: flex; align-items: center; font-size: 50px; gap: 20px; margin-left: -2px; }
    .search { width: 1600px; height: 120px; border-radius: 15px; background: #e8eaed; display: flex; align-items: center; gap: 49px; padding-left: 67px; color: #b0b4b8; font-size: 40px; }
    .tools { margin-left: auto; display: flex; align-items: center; }
    .tools > :nth-child(2) { margin: 0 68px 0 65px; } .tools > :nth-child(4) { margin-left: 64px; }
    .body { display: flex; height: 1688px; }
    .rail { width: 140px; border-right: 2px solid #d3d5d9; padding: 20px 0 60px 2px; display: flex; flex-direction: column; flex: none; }
    .rail > div { height: 120px; display: grid; place-items: center; }
    .rail > div:last-child { margin-top: auto; height: 90px; }
    .on { width: 90px; height: 90px; border-radius: 50%; background: #e6eefa; display: grid; place-items: center; }
    nav { width: 678px; padding-top: 19px; display: flex; flex-direction: column; flex: none; font: 500 34px Inter, Roboto, sans-serif; }
    .it { height: 90px; display: flex; align-items: center; padding-left: 50px; flex: none; }
    .it.sub { padding-left: 33px; } .it.sub svg { margin-right: 47px; } .it.nosub { padding-left: 90px; }
    .it.cur { width: 615px; background: #e8f0fe; color: #1967d2; border-radius: 0 45px 45px 0; }
    .it.grp { color: #5f6368; } .it.grp svg { margin-left: auto; margin-right: 102px; }
    .hr { width: 553px; height: 2px; background: #dadce0; margin: 14px 0 11px 31px; flex: none; }
    .libr { margin-top: auto; padding-left: 43px; gap: 33px; }
    .hr.low { width: 576px; margin: 38px 0 0 32px; }
    .col { height: 140px; display: flex; align-items: center; padding: 0 0 9px 539px; flex: none; }
    .main { flex: 1; position: relative; }
    .bar { height: 165px; width: 3007px; display: flex; align-items: center; padding: 0 127px 5px 61px; background: #f8f9fb; position: relative; z-index: 1; }
    .bar h2 { margin: 0; font-weight: 400; font-size: 53px; }
    .pill { width: 148px; height: 70px; border: 2px solid #dadce0; border-radius: 35px; margin-left: 21px; display: flex; align-items: center; justify-content: space-between; padding: 0 29px 0 17px; }
    .av { width: 60px; height: 60px; border-radius: 50%; margin: 12px 0 0 66px; background: #1a73e8; color: #fff; display: grid; place-items: center; font: 500 35px Roboto, sans-serif; }
    .av.add { background: none; margin-left: 20px; }
    .acts { margin: 0 0 10px auto; display: flex; align-items: center; font: 500 34px Inter, sans-serif; color: #3c4043; }
    .acts > :nth-child(2) { margin: 0 47px 0 37px; } .acts > :nth-child(4) { margin: 0 42px 0 45px; }
    .shade { position: absolute; left: 0; top: 165px; width: 3020px; height: 7px; background: linear-gradient(#0000004d, #00000000); mask-image: linear-gradient(90deg, transparent, #000 5%, #000 95%, transparent); z-index: 1; }
    .scroll { display: flex; height: 1523px; overflow: hidden; }
    .canvas { width: 2979px; padding-left: 60px; flex: none; }
    .sb { width: 43px; background: #f0f0f0; display: flex; flex-direction: column; padding-top: 201px; align-items: center; }
    .grip { width: 43px; height: 721px; background: #cdcdcd; }
    .sb svg { margin: auto 0 14px 0; }
    .edge { position: absolute; left: 3007px; top: 0; width: 15px; height: 165px; background: #f0f0f0; padding-top: 18px; }
    .top { display: flex; height: 452px; }
    .dev { width: 765px; height: 415px; background: #fff; border: 2px solid #dadce0; border-top: 0; border-radius: 0 0 20px 20px; overflow: hidden; flex: none; }
    .donut { display: block; margin: -46px 0 0 255px; }
    .leg { display: flex; padding: 49px 0 0 124px; }
    .leg > div { width: 320px; display: grid; grid-template-columns: 29px 1fr; align-items: center; }
    .leg i { width: 15px; height: 15px; border-radius: 50%; background: #1967d2; }
    .leg .m i { background: #4285f4; }
    .leg b { font: 500 27.5px/36px Roboto, sans-serif; color: #5f6368; }
    .leg p { margin: 0; grid-column: 2; font: 400 54px/70px Inter, sans-serif; padding-top: 2px; }
    .cards { display: flex; gap: 36px; }
    .cards + .cards { margin-top: 36px; }
    .card { width: 964px; height: 1003px; background: #fff; border: 2px solid #dadce0; border-radius: 20px; padding: 56px 60px 0 59px; flex: none; }
    .card.c3 { width: 765px; }
    .ttl { height: 56px; display: flex; font: 500 34px/56px Inter, sans-serif; color: #3c4043; }
    .dash { height: 54px; background: repeating-linear-gradient(90deg, #80868b 0 9px, transparent 9px 18px) bottom / 100% 3px no-repeat; }
    .thin { background-size: 100% 1.5px; }
    .ttl svg { margin: 28px 0 0 11px; } .ttl .by { margin-left: 11px; } .ttl .nx { margin-left: 11px; } .ttl .lo { margin: 13px 0 0 19px; }
    .rank { height: 50px; margin-top: 47px; display: flex; gap: 20px; font: 500 39px/50px Inter, sans-serif; }
    .rank > :first-child { width: 43px; }
    .sel { background: #0078d7; color: #fff; padding: 0 10px 0 2px; margin-left: -1px; }
    .mid { height: 120px; display: flex; justify-content: space-between; margin-top: 10px; padding-left: 63px; }
    .val { font: 400 54px/68px Inter, sans-serif; height: 68px; width: max-content; }
    .val.sel { padding: 0 3px 0 2px; }
    .pct { font-size: 30px; line-height: 34px; color: #5f6368; margin-top: 5px; }
    .chart { display: flex; gap: 2px; align-items: flex-end; height: 110px; width: 448px; margin-right: 27px; }
    .c3 .chart { width: 371px; margin-right: 2px; }
    .chart i { flex: 1; min-height: 2px; background: #1a73e8; }
    .none { width: 268px; margin: 52px 119px 0 0; font-size: 35px; line-height: 40px; color: #5f6368; }
    .dsh { font-size: 30px; line-height: 34px; color: #5f6368; margin-top: 73px; }
    .thd { display: flex; justify-content: space-between; height: 64px; margin-top: 30px; border-bottom: 2px solid #dadce0; font: 500 31px/52px Roboto, sans-serif; color: #5f6368; }
    .row { display: flex; justify-content: space-between; height: 73px; border-bottom: 6px solid #1a73e8; font: 500 35px/78px Roboto, sans-serif; color: #3c4043; }
    .row > :last-child { font-weight: 400; }
    .nodata { text-align: center; font-size: 35px; line-height: 40px; margin: 46px 0 28px; color: #5f6368; height: 0; }
    .pager { display: flex; justify-content: flex-end; margin-top: 356px; font-size: 34px; line-height: 60px; color: #202124; padding-right: 8px; }
    .pager svg { margin: 41px 0 0 22px; } .pager svg + svg { margin-left: 56px; }
    .fab { position: absolute; left: 2892px; top: 1473px; width: 100px; height: 100px; border-radius: 50%; background: #fff; box-shadow: 0 3px 10px #0005; display: grid; place-items: center; z-index: 2; }
  `];
  private card(c: Card) {
    const max = Math.max(...(c.bars ?? [1]));
    return html`<section class="card ${c.cls}">
      <div class="ttl">${c.title}</div>
      <div class="rank"><span>${c.rank}</span>${c.name ? html`<div class=${c.sel ? "sel" : ""}><span class="fit" ${fit(c.nameW!)}>${c.name}</span></div>` : html`<span>-</span>`}</div>
      <div class="mid">${c.bars
        ? html`<div><div class="val ${c.sel ? "sel" : ""}"><span class="fit" ${fit(c.valueW!)}>${c.value}</span></div><div class="pct">100%</div></div>
          <div class="chart">${c.bars.map((b) => html`<i style="height:${(b / max) * 90}px"></i>`)}</div>`
        : html`<div class="dsh">-</div><div class="none"><span class="fit" ${fit(268)}>No data available</span></div>`}</div>
      <div class="thd"><span class="fit" ${fit(c.head[1])}>${c.head[0]}</span><span class="fit" ${fit(c.head[3])}>${c.head[2]}</span></div>
      ${c.row ? html`<div class="row"><span class="fit" ${fit(c.row[1])}>${c.row[0]}</span><span class="fit" ${fit(c.row[3])}>${c.row[2]}</span></div>
        <div class="pager"><span class="fit" ${fit(107)}>1-1 of 1</span>${chev("M7 1 2 8l5 7", "#757575", 18, 30, "0 0 9 16")}${chev("M2 1l5 7-5 7", "#757575", 18, 30, "0 0 9 16")}</div>`
        : html`<div class="nodata"><span class="fit" ${fit(268)}>No data available</span></div>`}
    </section>`;
  }
  render() {
    const tri = box("0 0 5 10", 10, 20, svg`<path d="M0 0l5 5-5 5z" fill="#202124"/>`);
    const sub = (t: string, w: number, leaf = false) => html`<div class="it ${leaf ? "nosub" : "sub"}">${leaf ? nothing : tri}<span class="fit" ${fit(w)}>${t}</span></div>`;
    const grp = (t: string, w: number) => html`<div class="hr"></div><div class="it grp"><span class="fit" ${fit(w)}>${t}</span>${chev("M1 7 6 2l5 5", G5, 26, 17)}</div>`;
    const cards: Card[] = [
      { cls: "c1", rank: "#1", title: html`<div class="dash"><span class="fit" ${fit(95)}>Users</span></div><span class="fit by" ${fit(328)}>by First user source</span>${caret()}`, head: ["FIRST USER SOURCE", 324, "USERS", 103] },
      { cls: "c2", rank: "#1", title: html`<span class="fit" ${fit(94)}>Users</span>${caret()}<span class="fit lo" ${fit(39)}>by</span><div class="dash thin nx"><span class="fit" ${fit(158)}>Audience</span></div>`, head: ["AUDIENCE", 161, "USERS", 103], name: "All Users", nameW: 160, value: "5", valueW: 28, bars: [0, 0, 2, 1, 1, 1, 0, 1, 1, 1, 1, 1, 1, 1, 0, 0, 0, 0, 0, 0, 0, 1, 1, 1, 0, 0, 1, 1, 1, 0], row: ["All Users", 131, "5", 19] },
      { cls: "c3", rank: "#1", title: html`<div class="dash"><span class="fit" ${fit(98)}>Views</span></div><span class="fit by" ${fit(39)}>by</span><div class="dash thin nx"><span class="fit" ${fit(455)}>Page title and screen name</span></div>`, head: ["PAGE TITLE AND S…", 315, "VIEWS", 101], name: "Lab 10 - Retur...the Party Horn", nameW: 552, sel: true, value: "30", valueW: 60, bars: [0, 2, 3, 2, 1, 0, 0, 1, 0, 1, 2, 3, 4, 0, 0, 0, 0, 0, 0, 0, 0, 3, 3, 2, 0, 0, 1, 1, 1, 0], row: ["Lab 10 - Re... Party Horn", 355, "30", 37] },
    ];
    return html`
      <header>
        ${box("0.8 1 15 14", 65, 74, gaBars)}
        <span class="brand fit" ${fit(217)}>Analytics</span><div class="sep"></div>
        <div class="acct"><div class="crumb"><span class="fit" ${fit(169)}>All accounts</span>${box("0 0 8 12", 12, 18, svg`<path d="M1 1l5.5 5L1 11" fill="none" stroke=${G5} stroke-width="2.2"/>`)}<span class="fit" ${fit(157)}>Patanalysis</span></div>
          <div class="prop g"><span class="fit" ${fit(166)}>cse110</span>${caret()}</div></div>
        <div class="search">${box("3 3 17.49 17.49", 44, 44, svg`<path fill=${G5} d="M15.5 14h-.79l-.28-.27C15.41 12.59 16 11.11 16 9.5 16 5.91 13.09 3 9.5 3S3 5.91 3 9.5 5.91 16 9.5 16c1.61 0 3.09-.59 4.23-1.57l.27.28v.79l5 4.99L20.49 19l-4.99-5zm-6 0C7.01 14 5 11.99 5 9.5S7.01 5 9.5 5 14 7.01 14 9.5 11.99 14 9.5 14z"/>`)}<span class="fit" ${fit(421)}>Try searching "Admin"</span></div>
        <div class="tools">
          ${box("0 0 40 40", 40, 40, svg`<path fill="#757575" d="M0 0h15v15H0zM25 0h15v15H25zM0 25h15v15H0zM25 25h15v15H25z"/>`)}
          ${box("2 2 20 20", 51, 51, svg`<path fill=${G5} d="M12 2C6.48 2 2 6.48 2 12s4.48 10 10 10 10-4.48 10-10S17.52 2 12 2zm1 17h-2v-2h2v2zm2.07-7.75l-.9.92C13.45 12.9 13 13.5 13 15h-2v-.5c0-1.1.45-2.1 1.17-2.83l1.24-1.26c.37-.36.59-.86.59-1.41 0-1.1-.9-2-2-2s-2 .9-2 2H8c0-2.21 1.79-4 4-4s4 1.79 4 4c0 .88-.36 1.68-.93 2.25z"/>`)}
          ${box("0 0 12 42", 12, 42, svg`<g fill=${G5}><circle cx="6" cy="6" r="5.3"/><circle cx="6" cy="21" r="5.3"/><circle cx="6" cy="36" r="5.3"/></g>`)}
          ${box("0 0 80 80", 80, 80, svg`<defs><clipPath id="av"><circle cx="40" cy="40" r="40"/></clipPath></defs><g clip-path="url(#av)"><circle cx="40" cy="40" r="40" fill="#a0c3ff"/><circle cx="40" cy="31" r="15" fill="#4374e0"/><path fill="#4374e0" d="M15 72c0-14 9-21 25-21s25 7 25 21v10H15z"/></g>`)}
        </div>
      </header>
      <div class="body">
        <div class="rail">
          <div><span class="on">${box("3 3 18 18", 46, 46, svg`<path fill="#1967d2" d="M19 3H5c-1.1 0-2 .9-2 2v14c0 1.1.9 2 2 2h14c1.1 0 2-.9 2-2V5c0-1.1-.9-2-2-2zM9 17H7v-7h2v7zm4 0h-2V7h2v10zm4 0h-2v-4h2v4z"/>`)}</span></div>
          <div>${box("0 0 50 50", 50, 50, svg`<g fill="none" stroke=${G5} stroke-width="5"><path d="M25 2.5a22.5 22.5 0 1 0 0 45h19q3.5 0 3.5-3.5V25A22.5 22.5 0 0 0 25 2.5z"/><path d="M6 32l10-8 8 8 13-12"/></g><path fill=${G5} d="M27 15h13v13zM40 40l7-7v14H33z"/><circle cx="43.5" cy="43.5" r="2" fill="#f8f9fb"/>`)}</div>
          <div>${box("0 0 50 50", 50, 50, svg`<g fill="none" stroke=${G5} stroke-width="4.6"><path d="M27 47.5A22.6 22.6 0 1 1 47.5 27"/><path d="M22 37A12.5 12.5 0 1 1 37 22"/></g><path fill=${G5} d="M25 25l25 8-11 4 11 11-3 3-11-11-4 10z"/>`)}</div>
          <div>${box("0 0 46 36", 46, 36, svg`<path fill=${G5} d="M0 0h46v36H0z"/><path fill="#f8f9fb" d="M5 5h6v5H5zM16 5h25v5H16zM5 15.5h6v5H5zM16 15.5h25v5H16zM5 26h6v5H5zM16 26h25v5H16z"/>`)}</div>
          <div>${box("2.2 2 19.6 20", 50, 50, svg`<path fill=${G5} d=${GEAR}/>`)}</div>
        </div>
        <nav>
          <div class="it"><span class="fit" ${fit(292)}>Reports snapshot</span></div>
          <div class="it cur"><span class="fit" ${fit(146)}>Realtime</span></div>
          ${grp("Life cycle", 157)}${sub("Acquisition", 186)}${sub("Engagement", 208)}${sub("Monetization", 216)}${sub("Retention", 159, true)}
          ${grp("User", 75)}${sub("Demographics", 242)}${sub("Tech", 78)}
          <div class="it libr">${box("0 0 39 31", 39, 31, svg`<path d="M4 2h11l4 4h16q2 0 2 2v19q0 2-2 2H4q-2 0-2-2V4q0-2 2-2z" fill="none" stroke="#202124" stroke-width="4"/><path d="M2 2h13l4 5H2z" fill="#202124"/>`)}<span class="fit" ${fit(117)}>Library</span></div>
          <div class="hr low"></div>
          <div class="col">${box("0 0 20 32", 20, 32, svg`<path d="M18 2 4 16l14 14" fill="none" stroke="#000" stroke-width="4.5"/>`)}</div>
        </nav>
        <div class="main">
          <div class="bar"><h2 class="g"><span class="fit" ${fit(455)}>Realtime overview</span></h2>
            <div class="pill">${box("0 0 42 42", 42, 42, svg`<circle cx="21" cy="21" r="18.7" fill="none" stroke="#188038" stroke-width="4.4"/><path d="M11 21.5l7 7 13-14" fill="none" stroke="#188038" stroke-width="4.4"/>`)}${caret(25, 13)}</div>
            <div class="av">A</div><div class="av add">${box("0 0 60 60", 60, 60, svg`<circle cx="30" cy="30" r="29" fill="none" stroke="#9aa0a6" stroke-width="2" stroke-dasharray="7.5 7.68"/><path d="M30 15v30M15 29h30" stroke="#757575" stroke-width="3.5"/>`)}</div>
            <div class="acts">
              ${box("0 0 36 36", 36, 36, svg`<g fill="none" stroke=${G5} stroke-width="3.2"><path d="M1.6 9V1.6H9M27 1.6h7.4V9M1.6 27v7.4H9M34.4 27v7.4H27"/><circle cx="18" cy="12" r="4.5"/><path d="M8 28c0-8 20-8 20 0z"/></g>`)}
              <span class="fit" ${fit(322)}>View user snapshot</span>
              ${box("0 0 38 36", 38, 36, svg`<path fill="none" stroke=${G5} stroke-width="5" d="M2.5 13V2.5H13M25 2.5h10.5V13M2.5 23v10.5H13M25 33.5h10.5V23"/>`)}
              ${box("0 0 51 50", 51, 50, svg`<path fill="none" stroke=${G5} stroke-width="4.6" d="M34 4H6q-3.500 0-3.500 3.500V44q0 3.500 3.500 3.500h37q3.500 0 3.500-3.500V15M14 20v19M23 27v12M35 30v9"/><path d="M26 22 43 5" stroke=${G5} stroke-width="7"/><path d="M44.5 3.5l3-3" stroke=${G5} stroke-width="7"/>`)}
              ${box("0 0 46 50", 46, 50, svg`<g fill="none" stroke=${G5} stroke-width="4.6"><circle cx="38" cy="8" r="5.5"/><circle cx="8" cy="25" r="5.5"/><circle cx="38" cy="42" r="5.5"/><path d="M13 22 33 11M13 28l20 11"/></g>`)}
            </div></div>
          <div class="edge">${box("0 0 4 10", 4, 10, svg`<path d="M0 0l4 6v4L0 6z" fill="#505050"/>`)}</div><div class="shade"></div>
          <div class="scroll">
            <div class="canvas">
              <div class="top">
                <div class="dev">
                  <svg class="donut" viewBox="-125 -125 250 250" width="250" height="250"><g fill="none" stroke-width="35" transform="rotate(-90)"><circle r="107.5" stroke="#4285f4"/><circle r="107.5" stroke="#1967d2" pathLength="100" stroke-dasharray="60 100"/></g></svg>
                  <div class="leg"><div><i></i><b class="fit" ${fit(132)}>DESKTOP</b><p><span class="fit" ${fit(164)}>60.0%</span></p></div><div class="m"><i></i><b class="fit" ${fit(109)}>MOBILE</b><p><span class="fit" ${fit(166)}>40.0%</span></p></div></div>
                </div>
                <geo-map></geo-map>
              </div>
              <div class="cards">${cards.map((c) => this.card(c))}</div>
              <div class="cards"><section class="card"></section><section class="card"></section><section class="card c3"></section></div>
            </div>
            <div class="sb"><div class="grip"></div>${chev("M1 1.5 6 7l5-5.5", "#505050", 20, 14)}</div>
          </div>
          <div class="fab">${box("2 2 20 20", 52, 52, svg`<path fill="#202124" d="M20 2H4c-1.1 0-1.99.9-1.99 2L2 22l4-4h14c1.1 0 2-.9 2-2V4c0-1.1-.9-2-2-2zm0 14H5.17L4 17.17V4h16v12zM11 12h2v2h-2zM11 6h2v4h-2z"/>`)}</div>
        </div>
      </div>`;
  }
}

@customElement("app-root")
class AppRoot extends LitElement {
  static styles = css`
    :host { display: block; width: 3840px; height: 3240px; background: #000; overflow: hidden; }
    .upper { height: 1080px; padding-left: 959px; }
    .lower { height: 2160px; --u: 2.5px; display: flex; flex-direction: column; }
  `;
  private tabs: Tab[] = [
    { t: "Analytics | Realtime overview", i: "ga", w: 381, active: true },
    { t: "What happened to my Tracking ID", i: "google", w: 453 },
    { t: "Google Tag Manager", i: "gtm", w: 277 },
    { t: "Tag Assistant", i: "ta", w: 171 },
  ];
  render() {
    return html`
      <div class="upper"><party-screen></party-screen></div>
      <div class="lower">
        <browser-chrome big badge="27" .tabs=${this.tabs} .url=${["https://analytics.", "google.com", "/analytics/web/provision/?authuser=0#/p294882745/realtime/overview?params=_u..nav%3Dmaui"]} urlWidth="1914"></browser-chrome>
        <analytics-app></analytics-app>
        <task-bar full></task-bar>
      </div>`;
  }
}
